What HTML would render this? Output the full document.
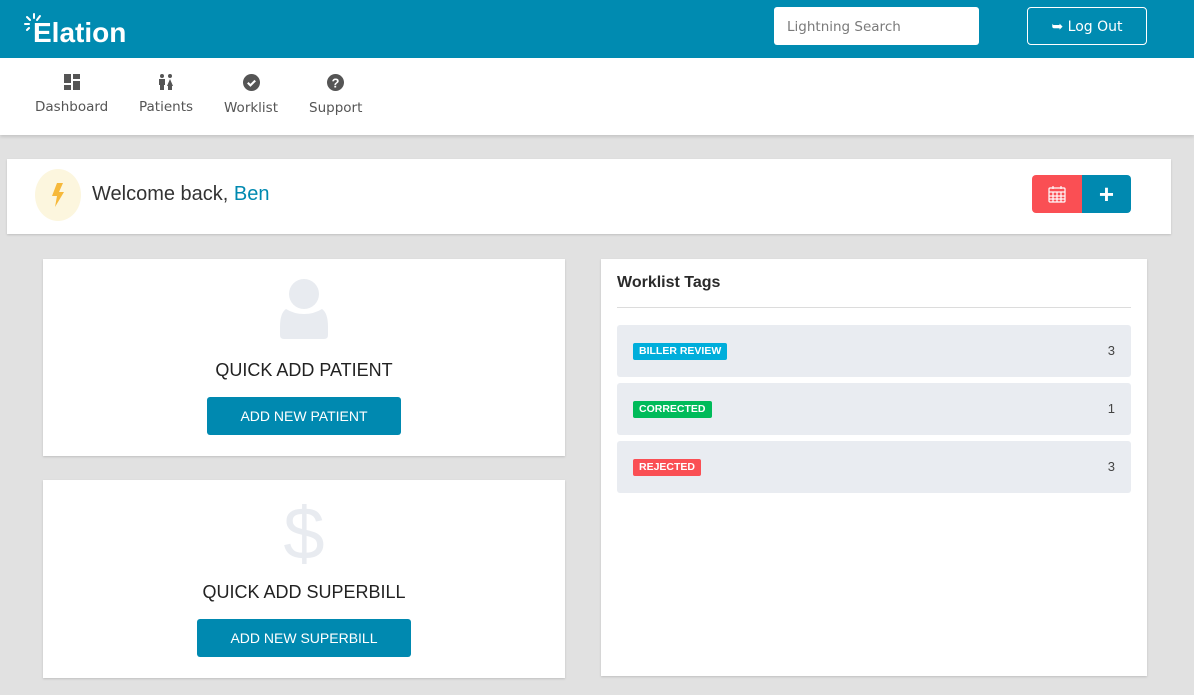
<!DOCTYPE html>
<html><head><style>
*{box-sizing:border-box;margin:0;padding:0}
body{width:1194px;height:695px;background:#e1e1e1;font-family:"Liberation Sans",sans-serif;position:relative;overflow:hidden}
.hdr{position:absolute;left:0;top:0;width:1194px;height:58px;background:#008bb1}
.logo{position:absolute;left:33px;top:17px;color:#fff;font-size:28px;font-weight:bold;font-family:"Liberation Sans",sans-serif}
.search{position:absolute;left:774px;top:7px;width:205px;height:38px;background:#fff;border-radius:3px;color:#7a7a7a;padding:12px 13px;font-family:"DejaVu Sans",sans-serif;font-size:13.5px}
.logout{position:absolute;left:1027px;top:7px;width:120px;height:38px;border:1px solid #fff;border-radius:4px;color:#fff;font-size:14px;text-align:center;line-height:38px;font-family:"DejaVu Sans",sans-serif}
.nav{position:absolute;left:0;top:58px;width:1194px;height:77px;background:#fff;box-shadow:0 2px 3px rgba(0,0,0,.12)}
.ni{position:absolute;top:16px;text-align:center;color:#555;font-size:13.5px;font-family:"DejaVu Sans",sans-serif}
.ni svg{display:block;margin:0 auto 9px}
.card{position:absolute;background:#fff;box-shadow:0 1px 2px rgba(0,0,0,.15)}
.btn{position:absolute;background:#0089b0;color:#fff;font-size:14px;text-align:center;line-height:38px;border-radius:3px}
.row{position:absolute;left:16px;width:514px;height:52px;background:#e9ecf1;border-radius:3px}
.tag{position:absolute;left:16px;top:18px;height:17px;padding:0 6px;color:#fff;font-size:10.5px;font-weight:bold;line-height:17px;border-radius:2px}
.cnt{position:absolute;right:16px;top:18px;font-size:13px;color:#444}
</style></head><body>
<div class="hdr">
<svg style="position:absolute;left:24px;top:13px" width="20" height="18" viewBox="0 0 20 18" stroke="#fff" stroke-width="2" stroke-linecap="round"><line x1="10" y1="1" x2="10" y2="5"/><line x1="3" y1="4" x2="6" y2="7"/><line x1="16" y1="3" x2="13" y2="7"/><line x1="1" y1="11" x2="5" y2="11"/><line x1="3" y1="17" x2="5" y2="15"/></svg>
<div class="logo">Elation</div>
<div class="search">Lightning Search</div>
<div class="logout">&#x27A5; Log Out</div>
</div>
<div class="nav">
<div class="ni" style="left:35px"><svg width="16" height="16" viewBox="0 0 16 16" fill="#555"><rect x="0" y="0" width="7" height="9"/><rect x="9" y="0" width="7" height="5"/><rect x="0" y="11" width="7" height="5"/><rect x="9" y="7" width="7" height="9"/></svg>Dashboard</div>
<div class="ni" style="left:139px"><svg width="16" height="16" viewBox="0 0 16 16" fill="#555"><circle cx="4" cy="2" r="2"/><rect x="1" y="5" width="6" height="6"/><rect x="2" y="11" width="4" height="5"/><circle cx="12" cy="2" r="2"/><polygon points="12,5 15,12 9,12"/><rect x="10" y="12" width="4" height="4"/></svg>Patients</div>
<div class="ni" style="left:224px"><svg width="17" height="17" viewBox="0 0 16 16"><circle cx="8" cy="8" r="8" fill="#555"/><path d="M4.5 8.2l2.5 2.5 4.5-4.5" stroke="#fff" stroke-width="2" fill="none"/></svg>Worklist</div>
<div class="ni" style="left:309px"><svg width="17" height="17" viewBox="0 0 16 16"><circle cx="8" cy="8" r="8" fill="#555"/><text x="8" y="12.5" font-size="12" font-weight="bold" fill="#fff" text-anchor="middle" font-family="Liberation Sans">?</text></svg>Support</div>
</div>
<div class="card" style="left:7px;top:159px;width:1164px;height:75px">
<div style="position:absolute;left:28px;top:10px;width:46px;height:52px;border-radius:50%;background:#fcf6de"></div>
<svg style="position:absolute;left:44px;top:24px" width="14" height="24" viewBox="0 0 14 24"><polygon points="6,0 12,0 8,9 13,9 4,24 6,13 1,13" fill="#f6b93b"/></svg>
<div style="position:absolute;left:85px;top:24px;font-size:20px;color:#333">Welcome back, <span style="color:#0089b0">Ben</span></div>
<div style="position:absolute;left:1025px;top:16px;width:50px;height:38px;background:#fa4f54;border-radius:4px 0 0 4px"></div>
<svg style="position:absolute;left:1041px;top:26px" width="18" height="18" viewBox="0 0 18 18" fill="none" stroke="#fff" stroke-width="1.2"><rect x="1" y="3" width="16" height="14" rx="1"/><line x1="1" y1="7" x2="17" y2="7"/><line x1="1" y1="11" x2="17" y2="11"/><line x1="1" y1="14" x2="17" y2="14"/><line x1="5" y1="7" x2="5" y2="17"/><line x1="9" y1="7" x2="9" y2="17"/><line x1="13" y1="7" x2="13" y2="17"/><line x1="5" y1="1" x2="5" y2="4"/><line x1="13" y1="1" x2="13" y2="4"/></svg>
<div style="position:absolute;left:1075px;top:16px;width:49px;height:38px;background:#0089b0;border-radius:0 4px 4px 0;color:#fff;font-size:26px;font-weight:bold;text-align:center;line-height:38px">+</div>
</div>
<div class="card" style="left:43px;top:259px;width:522px;height:197px">
<svg style="position:absolute;left:235px;top:20px" width="52" height="62" viewBox="0 0 52 62" fill="#e8ebf0"><circle cx="26" cy="15" r="15"/><path d="M8 30 Q16 35 26 35 Q36 35 44 30 Q50 34 50 48 L50 56 Q50 60 46 60 L6 60 Q2 60 2 56 L2 48 Q2 34 8 30Z"/></svg>
<div style="position:absolute;left:0;width:522px;top:101px;text-align:center;font-size:18px;color:#222">QUICK ADD PATIENT</div>
<div class="btn" style="left:164px;top:138px;width:194px">ADD NEW PATIENT</div>
</div>
<div class="card" style="left:43px;top:480px;width:522px;height:198px">
<div style="position:absolute;left:0;width:522px;top:14px;text-align:center;font-size:74px;line-height:80px;color:#e8ebf0">$</div>
<div style="position:absolute;left:0;width:522px;top:102px;text-align:center;font-size:18px;color:#222">QUICK ADD SUPERBILL</div>
<div class="btn" style="left:154px;top:139px;width:214px">ADD NEW SUPERBILL</div>
</div>
<div class="card" style="left:601px;top:259px;width:546px;height:417px">
<div style="position:absolute;left:16px;top:15px;font-size:16px;font-weight:bold;color:#2a2a2a">Worklist Tags</div>
<div style="position:absolute;left:16px;top:48px;width:514px;height:1px;background:#dcdcdc"></div>
<div class="row" style="top:66px"><span class="tag" style="background:#00aedb">BILLER REVIEW</span><span class="cnt">3</span></div>
<div class="row" style="top:124px"><span class="tag" style="background:#00bb5a">CORRECTED</span><span class="cnt">1</span></div>
<div class="row" style="top:182px"><span class="tag" style="background:#fa4f54">REJECTED</span><span class="cnt">3</span></div>
</div>
</body></html>
